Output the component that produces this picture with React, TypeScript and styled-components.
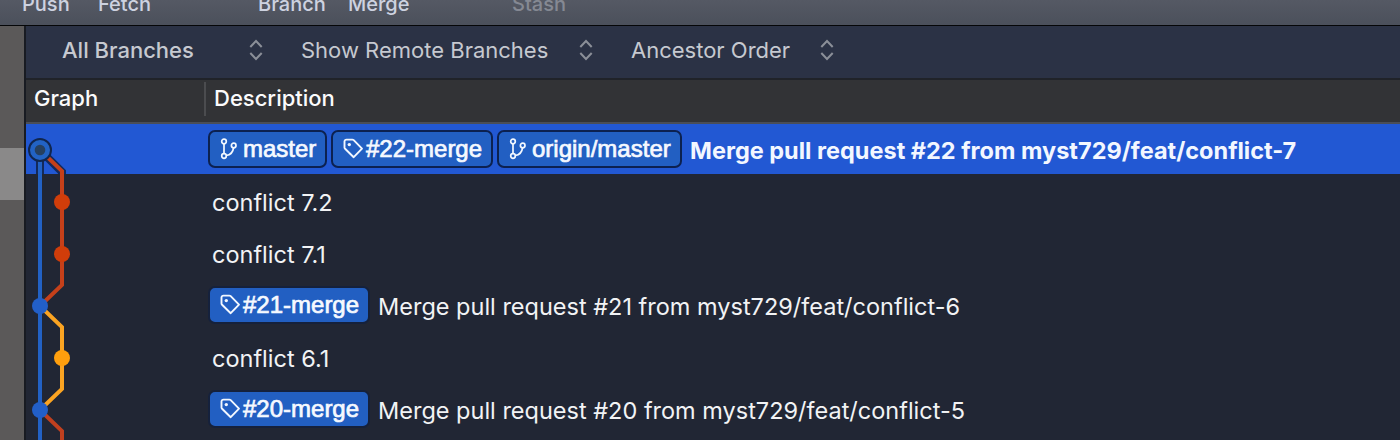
import React from 'react';
import styled, { createGlobalStyle } from 'styled-components';

const GlobalStyle = createGlobalStyle`
  * { box-sizing: border-box; }
  html, body { margin: 0; background: #212634; overflow: hidden; }
`;

const Window = styled.div`
  width: 1400px;
  height: 440px;
  display: flex;
  flex-direction: column;
  overflow: hidden;
  font-family: Inter, "Liberation Sans", sans-serif;
  white-space: pre;
`;

const Toolbar = styled.header`
  height: 26px;
  flex: none;
  display: flex;
  align-items: flex-end;
  padding: 0 0 8px 22px;
  overflow: hidden;
  background: linear-gradient(#555964, #4b505b);
  border-bottom: 1px solid #050608;
`;

const ToolbarItem = styled.span<{ $width: number; $dim?: boolean; $track?: number }>`
  width: ${p => p.$width}px;
  flex: none;
  font-size: 20px;
  line-height: 26px;
  font-weight: 500;
  letter-spacing: ${p => p.$track ?? 0}px;
  color: ${p => (p.$dim ? '#858993' : '#cdd2e0')};
`;

const Main = styled.div`
  flex: 1;
  display: flex;
  min-height: 0;
`;

const Sidebar = styled.aside`
  width: 26px;
  flex: none;
  padding-top: 122px;
  background: #5b5959;
  border-right: 2px solid #181b22;
`;

const SidebarSelection = styled.div`
  height: 52px;
  background: #8a8989;
`;

const Content = styled.main`
  flex: 1;
  min-width: 0;
  background: #212634;
`;

const FilterBar = styled.nav`
  height: 54px;
  display: flex;
  align-items: center;
  padding: 0 0 4px 36px;
  background: #2b3245;
  border-bottom: 2px solid #202329;
`;

const Filter = styled.div<{ $width: number; $strong?: boolean; $track: number }>`
  width: ${p => p.$width}px;
  flex: none;
  display: flex;
  align-items: center;
  justify-content: space-between;
  font-size: 22px;
  line-height: 28px;
  font-weight: ${p => (p.$strong ? 500 : 400)};
  letter-spacing: ${p => p.$track}px;
  color: #c6c9d0;
`;

const FilterGap = styled.div<{ $width: number }>`
  width: ${p => p.$width}px;
  flex: none;
`;

const TableHead = styled.div`
  height: 44px;
  display: flex;
  padding: 2px 0 0;
  background: #323336;
  border-bottom: 2px solid #4a4e58;
`;

const HeadCell = styled.div<{ $width?: number; $track: number }>`
  width: ${p => (p.$width ? p.$width + 'px' : 'auto')};
  height: 34px;
  padding-left: 8px;
  font-size: 22px;
  line-height: 33px;
  font-weight: 500;
  letter-spacing: ${p => p.$track}px;
  color: #fbfbfc;
  & + & { border-left: 2px solid #4b4c4f; }
`;

const Commits = styled.section`
  position: relative;
`;

const Graph = styled.svg`
  position: absolute;
  left: 0;
  top: 0;
`;

const Row = styled.div<{ $selected?: boolean }>`
  height: ${p => (p.$selected ? 50 : 52)}px;
  margin-bottom: ${p => (p.$selected ? 2 : 0)}px;
  display: flex;
  align-items: flex-start;
  padding: 6px 0 0 182px;
  background: ${p => (p.$selected ? '#2258d3' : 'transparent')};
`;

const Tag = styled.span<{ $width: number; $selected?: boolean }>`
  width: ${p => p.$width}px;
  height: 38px;
  flex: none;
  display: flex;
  align-items: center;
  margin-right: 4px;
  padding-left: 9px;
  border: 2px solid ${p => (p.$selected ? '#0c2150' : '#15213c')};
  border-radius: 7px;
  background: #225fc2;
  color: #f6f9ff;
`;

const TagLabel = styled.span<{ $track: number }>`
  font-family: "Liberation Sans", Arial, sans-serif;
  font-size: 24px;
  line-height: 34px;
  letter-spacing: ${p => p.$track}px;
  -webkit-text-stroke: 0.7px #f6f9ff;
`;

const Message = styled.span<{ $strong?: boolean; $inset: number; $track: number }>`
  padding-left: ${p => p.$inset}px;
  font-size: ${p => (p.$strong ? 23.5 : 23.5)}px;
  line-height: 42px;
  font-weight: ${p => (p.$strong ? 700 : 400)};
  letter-spacing: ${p => p.$track}px;
  color: ${p => (p.$strong ? '#f3f7ff' : '#f2f3f5')};
`;

const Stepper = () => (
  <svg width="14" height="22" viewBox="0 0 14 22" fill="none" stroke="#8b8f98" strokeWidth="2">
    <path d="M1.3 8 7 2l5.700 6M1.300 14 7 20l5.700-6" />
  </svg>
);

const BranchIcon = () => (
  <svg width="24" height="24" viewBox="0 0 24 24" fill="none" stroke="#f3f8ff" strokeWidth="1.700">
    <circle cx="5" cy="4.500" r="2.300" />
    <circle cx="5" cy="19" r="2.300" />
    <circle cx="14.700" cy="8.500" r="2.300" />
    <path d="M5 6.800v9.900M14.500 10.800c-.5 4.700-3 7-7.300 7.700" />
  </svg>
);

const TagIcon = () => (
  <svg width="24" height="24" viewBox="0 0 24 24" fill="none" stroke="#f3f8ff" strokeWidth="1.900" strokeLinejoin="round">
    <path d="M2.500 4.600a2 2 0 0 1 2-2h5.800a2 2 0 0 1 1.400.6l8.300 8.400-8.300 8.600-8.600-8.400a2 2 0 0 1-.6-1.400z" />
    <circle cx="7.300" cy="7.600" r="1.700" fill="#f3f8ff" stroke="none" />
  </svg>
);

type Ref = { kind: 'branch' | 'tag'; label: string; width: number; track: number };
type Commit = { refs?: Ref[]; message: string; inset: number; track: number; selected?: boolean };

const commits: Commit[] = [
  {
    selected: true,
    refs: [
      { kind: 'branch', label: 'master', width: 119, track: 0 },
      { kind: 'tag', label: '#22-merge', width: 162, track: 0 },
      { kind: 'branch', label: 'origin/master', width: 185, track: 0 },
    ],
    message: 'Merge pull request #22 from myst729/feat/conflict-7',
    inset: 4,
    track: 0,
  },
  { message: 'conflict 7.2', inset: 4, track: 0 },
  { message: 'conflict 7.1', inset: 4, track: 0 },
  {
    refs: [{ kind: 'tag', label: '#21-merge', width: 162, track: 0 }],
    message: 'Merge pull request #21 from myst729/feat/conflict-6',
    inset: 4,
    track: 0,
  },
  { message: 'conflict 6.1', inset: 4, track: 0 },
  {
    refs: [{ kind: 'tag', label: '#20-merge', width: 162, track: 0 }],
    message: 'Merge pull request #20 from myst729/feat/conflict-5',
    inset: 4,
    track: 0,
  },
];

const CommitGraph = () => (
  <Graph width="178" height="318" viewBox="0 0 178 318" fill="none">
    <path d="M14 26V50M14 26 36 48V50" stroke="#132a5c" strokeWidth="8" />
    <path d="M14 26 36 47V161L14 182" stroke="#c5401a" strokeWidth="4" />
    <path d="M14 182 36 203V265L14 286" stroke="#fba422" strokeWidth="4" />
    <path d="M14 286 36 307V318" stroke="#c0401f" strokeWidth="4" />
    <path d="M14 26V318" stroke="#2261c4" strokeWidth="4" />
    <circle cx="36" cy="78" r="8" fill="#d03d0a" />
    <circle cx="36" cy="130" r="8" fill="#d03d0a" />
    <circle cx="36" cy="234" r="8" fill="#ff9f0d" />
    <circle cx="14" cy="182" r="8" fill="#225fc8" />
    <circle cx="14" cy="286" r="8" fill="#225fc8" />
    <circle cx="14" cy="26" r="11" fill="#2263c4" stroke="#10264f" strokeWidth="2" />
    <circle cx="14" cy="26" r="5.300" fill="#26405f" />
  </Graph>
);

export default function App() {
  return (
    <Window>
      <GlobalStyle />
      <Toolbar>
        <ToolbarItem $width={76}>Push</ToolbarItem>
        <ToolbarItem $width={160}>Fetch</ToolbarItem>
        <ToolbarItem $width={90}>Branch</ToolbarItem>
        <ToolbarItem $width={164}>Merge</ToolbarItem>
        <ToolbarItem $width={80} $dim>Stash</ToolbarItem>
      </Toolbar>
      <Main>
        <Sidebar><SidebarSelection /></Sidebar>
        <Content>
          <FilterBar>
            <Filter $width={201} $strong $track={0}><span>All Branches</span><Stepper /></Filter>
            <FilterGap $width={38} />
            <Filter $width={292} $track={0}><span>Show Remote Branches</span><Stepper /></Filter>
            <FilterGap $width={38} />
            <Filter $width={203} $track={0}><span>Ancestor Order</span><Stepper /></Filter>
          </FilterBar>
          <TableHead>
            <HeadCell $width={178} $track={0}>Graph</HeadCell>
            <HeadCell $track={0}>Description</HeadCell>
          </TableHead>
          <Commits>
            {commits.map(c => (
              <Row key={c.message} $selected={c.selected}>
                {c.refs?.map(r => (
                  <Tag key={r.label} $width={r.width} $selected={c.selected}>
                    {r.kind === 'tag' ? <TagIcon /> : <BranchIcon />}
                    <TagLabel $track={r.track}>{r.label}</TagLabel>
                  </Tag>
                ))}
                <Message $strong={c.selected} $inset={c.inset} $track={c.track}>{c.message}</Message>
              </Row>
            ))}
            <CommitGraph />
          </Commits>
        </Content>
      </Main>
    </Window>
  );
}
